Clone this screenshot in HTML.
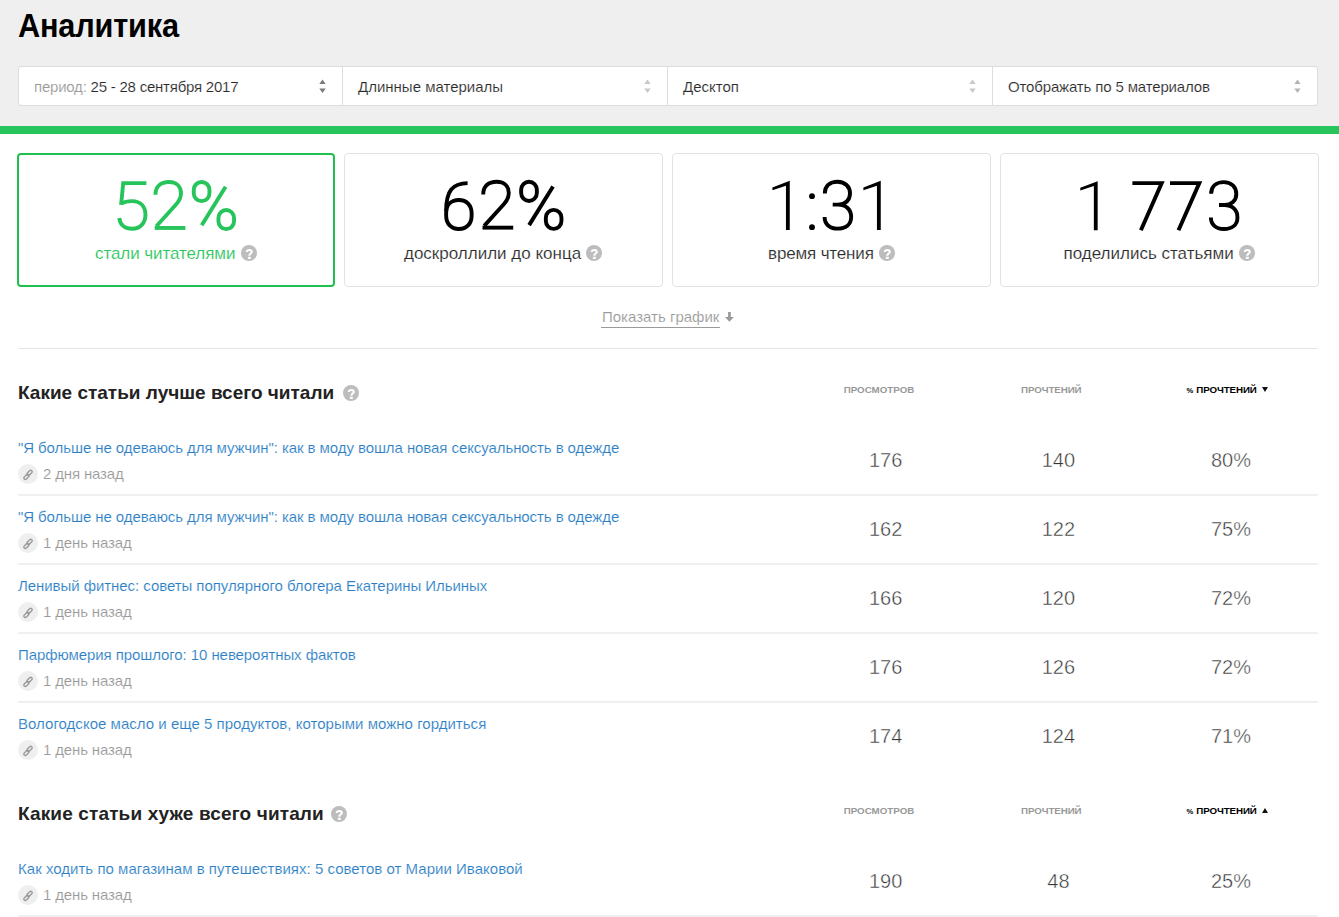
<!DOCTYPE html><html><head><meta charset="utf-8"><style>
html,body{margin:0;padding:0;background:#fff;width:1339px;height:917px;overflow:hidden;position:relative;font-family:"Liberation Sans", sans-serif}
.t{position:absolute;white-space:pre}
.th{-webkit-text-stroke:0.15px #fff}
#hdr{position:absolute;left:0;top:0;width:1339px;height:126px;background:#efefef}
#gbar{position:absolute;left:0;top:126px;width:1339px;height:8px;background:#27c55b}
#sel{position:absolute;left:18px;top:66px;width:1298px;height:38px;background:#fff;border:1px solid #dcdcdc;border-radius:3px}
.sep{position:absolute;top:0;width:1px;height:38px;background:#dedede}
.ar{position:absolute}
.card{position:absolute;top:153px;height:132px;border:1px solid #e2e2e2;border-radius:4px;background:#fff}
.q{position:absolute}
.lk{position:absolute;width:20px;height:20px;border-radius:50%;background:#efefef}
.lk svg{display:block}
.rsep{position:absolute;left:18px;width:1300px;height:2px;background:#f0f0f0}
#big{position:absolute;left:0;top:0}
</style></head><body>
<div id="hdr"></div><div id="gbar"></div><div class="t" style="left:18px;top:9.07px;font-size:33px;line-height:33px;color:#000;font-weight:700;letter-spacing:-0.2px;transform:scaleX(0.93);transform-origin:0 0">Аналитика</div>
<div id="sel"><div class="sep" style="left:323px"></div><div class="sep" style="left:648px"></div><div class="sep" style="left:973px"></div></div><div class="t th" style="left:34px;top:79.30px;font-size:15px;line-height:15px;color:#2a2a2a;font-weight:400;letter-spacing:-0.22px;"><span style="color:#999">период:</span> 25 - 28 сентября 2017</div>
<div class="t th" style="left:358px;top:79.30px;font-size:15px;line-height:15px;color:#2a2a2a;font-weight:400;letter-spacing:0px;">Длинные материалы</div>
<div class="t th" style="left:683px;top:79.30px;font-size:15px;line-height:15px;color:#2a2a2a;font-weight:400;letter-spacing:0px;">Десктоп</div>
<div class="t th" style="left:1008px;top:79.30px;font-size:15px;line-height:15px;color:#2a2a2a;font-weight:400;letter-spacing:-0.15px;">Отображать по 5 материалов</div>
<svg class="ar" style="left:319.4px;top:79px" width="7" height="15" viewBox="0 0 7 15"><path d="M0.3 5.1 L3.5 0.5 L6.7 5.1 Z M0.3 9.4 L3.5 14 L6.7 9.4 Z" fill="#7b7b7b"/></svg><svg class="ar" style="left:644.4px;top:79px" width="7" height="15" viewBox="0 0 7 15"><path d="M0.3 5.1 L3.5 0.5 L6.7 5.1 Z M0.3 9.4 L3.5 14 L6.7 9.4 Z" fill="#c8c8c8"/></svg><svg class="ar" style="left:969.4px;top:79px" width="7" height="15" viewBox="0 0 7 15"><path d="M0.3 5.1 L3.5 0.5 L6.7 5.1 Z M0.3 9.4 L3.5 14 L6.7 9.4 Z" fill="#c8c8c8"/></svg><svg class="ar" style="left:1294.4px;top:79px" width="7" height="15" viewBox="0 0 7 15"><path d="M0.3 5.1 L3.5 0.5 L6.7 5.1 Z M0.3 9.4 L3.5 14 L6.7 9.4 Z" fill="#b5b5b5"/></svg><div class="card" style="left:17px;width:314px;height:130px;border:2px solid #1fc050"></div><div class="card" style="left:344px;width:317px"></div><div class="card" style="left:672px;width:317px"></div><div class="card" style="left:1000px;width:317px"></div><div class="t th" style="left:95px;top:244.61px;font-size:17px;line-height:17px;color:#27c45b;font-weight:400;letter-spacing:-0.07px;">стали читателями</div>
<svg class="q" style="left:241.0px;top:245.0px" width="16" height="16" viewBox="0 0 16 16"><circle cx="8" cy="8" r="8" fill="#bdbdbd"/><path d="M5.7,7.1 C5.7,5.8 6.8,5.0 8.3,5.0 C9.9,5.0 10.8,5.9 10.8,6.9 C10.8,8.4 8.4,8.6 8.4,10.0 V10.7" fill="none" stroke="#fff" stroke-width="2.05"/><rect x="6.9" y="11.8" width="2.9" height="2.1" fill="#fff"/></svg>
<div class="t th" style="left:404px;top:244.61px;font-size:17px;line-height:17px;color:#2b2b2b;font-weight:400;letter-spacing:0px;">доскроллили до конца</div>
<svg class="q" style="left:585.6px;top:245.0px" width="16" height="16" viewBox="0 0 16 16"><circle cx="8" cy="8" r="8" fill="#bdbdbd"/><path d="M5.7,7.1 C5.7,5.8 6.8,5.0 8.3,5.0 C9.9,5.0 10.8,5.9 10.8,6.9 C10.8,8.4 8.4,8.6 8.4,10.0 V10.7" fill="none" stroke="#fff" stroke-width="2.05"/><rect x="6.9" y="11.8" width="2.9" height="2.1" fill="#fff"/></svg>
<div class="t th" style="left:768px;top:244.61px;font-size:17px;line-height:17px;color:#2b2b2b;font-weight:400;letter-spacing:-0.15px;">время чтения</div>
<svg class="q" style="left:879.0px;top:245.0px" width="16" height="16" viewBox="0 0 16 16"><circle cx="8" cy="8" r="8" fill="#bdbdbd"/><path d="M5.7,7.1 C5.7,5.8 6.8,5.0 8.3,5.0 C9.9,5.0 10.8,5.9 10.8,6.9 C10.8,8.4 8.4,8.6 8.4,10.0 V10.7" fill="none" stroke="#fff" stroke-width="2.05"/><rect x="6.9" y="11.8" width="2.9" height="2.1" fill="#fff"/></svg>
<div class="t th" style="left:1063.5px;top:244.61px;font-size:17px;line-height:17px;color:#2b2b2b;font-weight:400;letter-spacing:0px;">поделились статьями</div>
<svg class="q" style="left:1239.0px;top:245.0px" width="16" height="16" viewBox="0 0 16 16"><circle cx="8" cy="8" r="8" fill="#bdbdbd"/><path d="M5.7,7.1 C5.7,5.8 6.8,5.0 8.3,5.0 C9.9,5.0 10.8,5.9 10.8,6.9 C10.8,8.4 8.4,8.6 8.4,10.0 V10.7" fill="none" stroke="#fff" stroke-width="2.05"/><rect x="6.9" y="11.8" width="2.9" height="2.1" fill="#fff"/></svg>
<svg id="big" width="1339" height="300" viewBox="0 0 1339 300"><g fill="none" stroke="#27c45b" stroke-width="3.9"><path d="M146.4,183.15 L123.2,183.15 L121.1,204.9"/><path d="M121.6,203.6 C124.6,201.4 128,201.1 132,201.1 C141,201.1 145.45,207 145.45,215 C145.45,223 140,228.8 132.4,228.8 C125,228.8 120,225 119.3,218"/><path d="M155.4,194.8 C155.4,186 161,182.05 169,182.05 C177,182.05 181,187 181,193.3 C181,197.6 179.3,200.9 176,204.5 L156.4,226.2"/><path d="M154.7,227.95 L185.4,227.95"/><rect x="193.75" y="181.95" width="15.7" height="19.2" rx="7.85"/><rect x="218.45" y="210.05" width="15.6" height="19" rx="7.8"/><path d="M225.6,186.7 L201.7,225.3"/></g><g fill="none" stroke="#000" stroke-width="3.9"><path d="M446.15,213 C446.15,204.5 451.5,199.95 458.9,199.95 C466.5,199.95 471.65,205 471.65,213.5 L471.65,215.5 C471.65,224 466.5,229.05 458.9,229.05 C451.3,229.05 446.15,224 446.15,215.5 Z"/><path d="M467.6,183.15 C452.5,183.5 446.15,190.5 446.15,211"/><g transform="translate(327.8 -0.3)"><path d="M155.4,194.8 C155.4,186 161,182.05 169,182.05 C177,182.05 181,187 181,193.3 C181,197.6 179.3,200.9 176,204.5 L156.4,226.2"/><path d="M154.7,227.95 L185.4,227.95"/></g><g transform="translate(327.4 -0.2)"><rect x="193.75" y="181.95" width="15.7" height="19.2" rx="7.85"/><rect x="218.45" y="210.05" width="15.6" height="19" rx="7.8"/><path d="M225.6,186.7 L201.7,225.3"/></g><g transform="translate(0 0)"><path d="M824.8,193.4 C824.8,186 830,181.75 837.5,181.75 C845,181.75 850,186.5 850,193.5 C850,200 845.5,204.65 838,204.65 L832.7,204.65 M838,204.65 C846,204.65 851.15,209.5 851.15,217 C851.15,224.5 845.5,228.65 837.5,228.65 C829.5,228.65 824.6,224 824.6,217"/></g><g transform="translate(0 0)"><path d="M1132.4,183.15 L1161.7,183.15 L1140.9,230.2" stroke-linejoin="miter"/></g><g transform="translate(37.6 0)"><path d="M1132.4,183.15 L1161.7,183.15 L1140.9,230.2" stroke-linejoin="miter"/></g><g transform="translate(386.3 0.4)"><path d="M824.8,193.4 C824.8,186 830,181.75 837.5,181.75 C845,181.75 850,186.5 850,193.5 C850,200 845.5,204.65 838,204.65 L832.7,204.65 M838,204.65 C846,204.65 851.15,209.5 851.15,217 C851.15,224.5 845.5,228.65 837.5,228.65 C829.5,228.65 824.6,224 824.6,217"/></g></g><g fill="#000"><path d="M772.4,187.5 L789.75,180.85 L789.75,229.95 L785.95,229.95 L785.95,185.7 L772.4,190.3 Z"/><g transform="translate(91 0)"><path d="M772.4,187.5 L789.75,180.85 L789.75,229.95 L785.95,229.95 L785.95,185.7 L772.4,190.3 Z"/></g><g transform="translate(307.9 0.3)"><path d="M772.4,187.5 L789.75,180.85 L789.75,229.95 L785.95,229.95 L785.95,185.7 L772.4,190.3 Z"/></g><circle cx="812" cy="196.2" r="2.9"/><circle cx="812" cy="227.2" r="2.9"/></g></svg><div class="t th" style="left:602px;top:309.10px;font-size:15px;line-height:15px;color:#999;font-weight:400;letter-spacing:0px;">Показать график</div>
<div style="position:absolute;left:601px;top:327px;width:119px;height:1px;background:#9a9a9a"></div><svg style="position:absolute;left:724px;top:311px" width="11" height="12" viewBox="0 0 11 12"><path d="M4.1,1.1 H6.8 V6.5 H4.1 Z M1,6 L9.9,6 L5.45,10.8 Z" fill="#9a9a9a"/></svg><div style="position:absolute;left:18px;top:348px;width:1300px;height:1px;background:#e6e6e6"></div><div class="t" style="left:18px;top:383.42px;font-size:19px;line-height:19px;color:#222;font-weight:700;letter-spacing:0px;">Какие статьи лучше всего читали</div>
<div class="t" style="left:879px;top:384.75px;font-size:9.75px;line-height:9.75px;color:#999;font-weight:700;letter-spacing:0px;transform:translateX(-50%)">ПРОСМОТРОВ</div>
<div class="t" style="left:1051.3px;top:384.75px;font-size:9.75px;line-height:9.75px;color:#999;font-weight:700;letter-spacing:-0.1px;transform:translateX(-50%)">ПРОЧТЕНИЙ</div>
<div class="t" style="left:1186.5px;top:386.57px;font-size:7.6px;line-height:7.6px;color:#000;font-weight:700;letter-spacing:0px;">%</div>
<div class="t" style="left:1196.3px;top:384.75px;font-size:9.75px;line-height:9.75px;color:#000;font-weight:700;letter-spacing:-0.1px;">ПРОЧТЕНИЙ</div>
<svg style="position:absolute;left:1262px;top:387px" width="6" height="5" viewBox="0 0 6 5"><path d="M0 0 H6 L3 5 Z" fill="#111"/></svg><div class="t th" style="left:18px;top:440.20px;font-size:15px;line-height:15px;color:#2a7ec6;font-weight:400;letter-spacing:-0.08px;">"Я больше не одеваюсь для мужчин": как в моду вошла новая сексуальность в одежде</div>
<div class="lk" style="left:18px;top:464px"><svg width="20" height="20" viewBox="0 0 20 20"><g transform="rotate(-45 10 10.9)" fill="none" stroke="#9a9a9a" stroke-width="1.4"><rect x="4.4" y="9.7" width="6.2" height="3" rx="1.5"/><rect x="9.4" y="9.1" width="6.2" height="3" rx="1.5"/></g></svg></div>
<div class="t th" style="left:43px;top:466.20px;font-size:15px;line-height:15px;color:#999;font-weight:400;letter-spacing:-0.15px;">2 дня назад</div>
<div class="t" style="left:885.7px;top:450.07px;font-size:20px;line-height:20px;color:#333;font-weight:400;letter-spacing:0px;transform:translateX(-50%);-webkit-text-stroke:0.45px #fff">176</div>
<div class="t" style="left:1058.4px;top:450.07px;font-size:20px;line-height:20px;color:#333;font-weight:400;letter-spacing:0px;transform:translateX(-50%);-webkit-text-stroke:0.45px #fff">140</div>
<div class="t" style="left:1231px;top:450.07px;font-size:20px;line-height:20px;color:#333;font-weight:400;letter-spacing:0px;transform:translateX(-50%);-webkit-text-stroke:0.45px #fff">80%</div>
<div class="rsep" style="top:494px"></div><div class="t th" style="left:18px;top:509.20px;font-size:15px;line-height:15px;color:#2a7ec6;font-weight:400;letter-spacing:-0.08px;">"Я больше не одеваюсь для мужчин": как в моду вошла новая сексуальность в одежде</div>
<div class="lk" style="left:18px;top:533px"><svg width="20" height="20" viewBox="0 0 20 20"><g transform="rotate(-45 10 10.9)" fill="none" stroke="#9a9a9a" stroke-width="1.4"><rect x="4.4" y="9.7" width="6.2" height="3" rx="1.5"/><rect x="9.4" y="9.1" width="6.2" height="3" rx="1.5"/></g></svg></div>
<div class="t th" style="left:43px;top:535.20px;font-size:15px;line-height:15px;color:#999;font-weight:400;letter-spacing:-0.15px;">1 день назад</div>
<div class="t" style="left:885.7px;top:519.07px;font-size:20px;line-height:20px;color:#333;font-weight:400;letter-spacing:0px;transform:translateX(-50%);-webkit-text-stroke:0.45px #fff">162</div>
<div class="t" style="left:1058.4px;top:519.07px;font-size:20px;line-height:20px;color:#333;font-weight:400;letter-spacing:0px;transform:translateX(-50%);-webkit-text-stroke:0.45px #fff">122</div>
<div class="t" style="left:1231px;top:519.07px;font-size:20px;line-height:20px;color:#333;font-weight:400;letter-spacing:0px;transform:translateX(-50%);-webkit-text-stroke:0.45px #fff">75%</div>
<div class="rsep" style="top:563px"></div><div class="t th" style="left:18px;top:578.20px;font-size:15px;line-height:15px;color:#2a7ec6;font-weight:400;letter-spacing:-0.057px;">Ленивый фитнес: советы популярного блогера Екатерины Ильиных</div>
<div class="lk" style="left:18px;top:602px"><svg width="20" height="20" viewBox="0 0 20 20"><g transform="rotate(-45 10 10.9)" fill="none" stroke="#9a9a9a" stroke-width="1.4"><rect x="4.4" y="9.7" width="6.2" height="3" rx="1.5"/><rect x="9.4" y="9.1" width="6.2" height="3" rx="1.5"/></g></svg></div>
<div class="t th" style="left:43px;top:604.20px;font-size:15px;line-height:15px;color:#999;font-weight:400;letter-spacing:-0.15px;">1 день назад</div>
<div class="t" style="left:885.7px;top:588.07px;font-size:20px;line-height:20px;color:#333;font-weight:400;letter-spacing:0px;transform:translateX(-50%);-webkit-text-stroke:0.45px #fff">166</div>
<div class="t" style="left:1058.4px;top:588.07px;font-size:20px;line-height:20px;color:#333;font-weight:400;letter-spacing:0px;transform:translateX(-50%);-webkit-text-stroke:0.45px #fff">120</div>
<div class="t" style="left:1231px;top:588.07px;font-size:20px;line-height:20px;color:#333;font-weight:400;letter-spacing:0px;transform:translateX(-50%);-webkit-text-stroke:0.45px #fff">72%</div>
<div class="rsep" style="top:632px"></div><div class="t th" style="left:18px;top:647.20px;font-size:15px;line-height:15px;color:#2a7ec6;font-weight:400;letter-spacing:-0.08px;">Парфюмерия прошлого: 10 невероятных фактов</div>
<div class="lk" style="left:18px;top:671px"><svg width="20" height="20" viewBox="0 0 20 20"><g transform="rotate(-45 10 10.9)" fill="none" stroke="#9a9a9a" stroke-width="1.4"><rect x="4.4" y="9.7" width="6.2" height="3" rx="1.5"/><rect x="9.4" y="9.1" width="6.2" height="3" rx="1.5"/></g></svg></div>
<div class="t th" style="left:43px;top:673.20px;font-size:15px;line-height:15px;color:#999;font-weight:400;letter-spacing:-0.15px;">1 день назад</div>
<div class="t" style="left:885.7px;top:657.07px;font-size:20px;line-height:20px;color:#333;font-weight:400;letter-spacing:0px;transform:translateX(-50%);-webkit-text-stroke:0.45px #fff">176</div>
<div class="t" style="left:1058.4px;top:657.07px;font-size:20px;line-height:20px;color:#333;font-weight:400;letter-spacing:0px;transform:translateX(-50%);-webkit-text-stroke:0.45px #fff">126</div>
<div class="t" style="left:1231px;top:657.07px;font-size:20px;line-height:20px;color:#333;font-weight:400;letter-spacing:0px;transform:translateX(-50%);-webkit-text-stroke:0.45px #fff">72%</div>
<div class="rsep" style="top:701px"></div><div class="t th" style="left:18px;top:716.20px;font-size:15px;line-height:15px;color:#2a7ec6;font-weight:400;letter-spacing:0.025px;">Вологодское масло и еще 5 продуктов, которыми можно гордиться</div>
<div class="lk" style="left:18px;top:740px"><svg width="20" height="20" viewBox="0 0 20 20"><g transform="rotate(-45 10 10.9)" fill="none" stroke="#9a9a9a" stroke-width="1.4"><rect x="4.4" y="9.7" width="6.2" height="3" rx="1.5"/><rect x="9.4" y="9.1" width="6.2" height="3" rx="1.5"/></g></svg></div>
<div class="t th" style="left:43px;top:742.20px;font-size:15px;line-height:15px;color:#999;font-weight:400;letter-spacing:-0.15px;">1 день назад</div>
<div class="t" style="left:885.7px;top:726.07px;font-size:20px;line-height:20px;color:#333;font-weight:400;letter-spacing:0px;transform:translateX(-50%);-webkit-text-stroke:0.45px #fff">174</div>
<div class="t" style="left:1058.4px;top:726.07px;font-size:20px;line-height:20px;color:#333;font-weight:400;letter-spacing:0px;transform:translateX(-50%);-webkit-text-stroke:0.45px #fff">124</div>
<div class="t" style="left:1231px;top:726.07px;font-size:20px;line-height:20px;color:#333;font-weight:400;letter-spacing:0px;transform:translateX(-50%);-webkit-text-stroke:0.45px #fff">71%</div>
<svg class="q" style="left:343.0px;top:385.0px" width="16" height="16" viewBox="0 0 16 16"><circle cx="8" cy="8" r="8" fill="#bdbdbd"/><path d="M5.7,7.1 C5.7,5.8 6.8,5.0 8.3,5.0 C9.9,5.0 10.8,5.9 10.8,6.9 C10.8,8.4 8.4,8.6 8.4,10.0 V10.7" fill="none" stroke="#fff" stroke-width="2.05"/><rect x="6.9" y="11.8" width="2.9" height="2.1" fill="#fff"/></svg>
<div class="t" style="left:18px;top:804.42px;font-size:19px;line-height:19px;color:#222;font-weight:700;letter-spacing:0.14px;">Какие статьи хуже всего читали</div>
<div class="t" style="left:879px;top:805.75px;font-size:9.75px;line-height:9.75px;color:#999;font-weight:700;letter-spacing:0px;transform:translateX(-50%)">ПРОСМОТРОВ</div>
<div class="t" style="left:1051.3px;top:805.75px;font-size:9.75px;line-height:9.75px;color:#999;font-weight:700;letter-spacing:-0.1px;transform:translateX(-50%)">ПРОЧТЕНИЙ</div>
<div class="t" style="left:1186.5px;top:807.57px;font-size:7.6px;line-height:7.6px;color:#000;font-weight:700;letter-spacing:0px;">%</div>
<div class="t" style="left:1196.3px;top:805.75px;font-size:9.75px;line-height:9.75px;color:#000;font-weight:700;letter-spacing:-0.1px;">ПРОЧТЕНИЙ</div>
<svg style="position:absolute;left:1262px;top:808px" width="6" height="5" viewBox="0 0 6 5"><path d="M0 5 H6 L3 0 Z" fill="#111"/></svg><div class="t th" style="left:18px;top:861.20px;font-size:15px;line-height:15px;color:#2a7ec6;font-weight:400;letter-spacing:0.024px;">Как ходить по магазинам в путешествиях: 5 советов от Марии Иваковой</div>
<div class="lk" style="left:18px;top:885px"><svg width="20" height="20" viewBox="0 0 20 20"><g transform="rotate(-45 10 10.9)" fill="none" stroke="#9a9a9a" stroke-width="1.4"><rect x="4.4" y="9.7" width="6.2" height="3" rx="1.5"/><rect x="9.4" y="9.1" width="6.2" height="3" rx="1.5"/></g></svg></div>
<div class="t th" style="left:43px;top:887.20px;font-size:15px;line-height:15px;color:#999;font-weight:400;letter-spacing:-0.15px;">1 день назад</div>
<div class="t" style="left:885.7px;top:871.07px;font-size:20px;line-height:20px;color:#333;font-weight:400;letter-spacing:0px;transform:translateX(-50%);-webkit-text-stroke:0.45px #fff">190</div>
<div class="t" style="left:1058.4px;top:871.07px;font-size:20px;line-height:20px;color:#333;font-weight:400;letter-spacing:0px;transform:translateX(-50%);-webkit-text-stroke:0.45px #fff">48</div>
<div class="t" style="left:1231px;top:871.07px;font-size:20px;line-height:20px;color:#333;font-weight:400;letter-spacing:0px;transform:translateX(-50%);-webkit-text-stroke:0.45px #fff">25%</div>
<div class="rsep" style="top:915px"></div><svg class="q" style="left:330.5px;top:806.0px" width="16" height="16" viewBox="0 0 16 16"><circle cx="8" cy="8" r="8" fill="#bdbdbd"/><path d="M5.7,7.1 C5.7,5.8 6.8,5.0 8.3,5.0 C9.9,5.0 10.8,5.9 10.8,6.9 C10.8,8.4 8.4,8.6 8.4,10.0 V10.7" fill="none" stroke="#fff" stroke-width="2.05"/><rect x="6.9" y="11.8" width="2.9" height="2.1" fill="#fff"/></svg>
</body></html>
